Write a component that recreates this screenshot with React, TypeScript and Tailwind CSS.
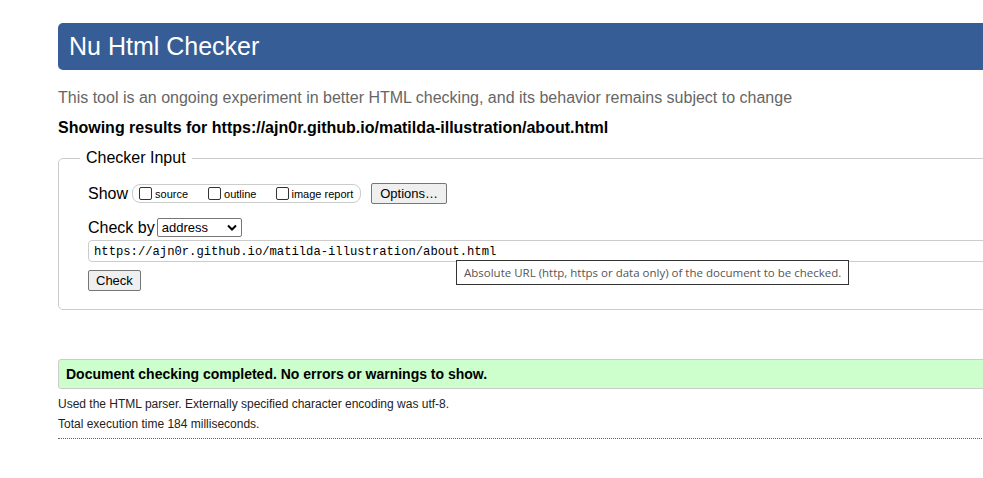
export default function App() {
  const url = "https://ajn0r.github.io/matilda-illustration/about.html";
  return (
    <div className="min-h-[478px] bg-white overflow-hidden font-['Liberation_Sans',Arial,sans-serif] text-black">
      <div className="ml-[58px] w-[1100px] pt-[23px]">
        <h1 className="h-[47px] rounded-l-[5px] bg-[#365d95] pl-[11px] text-[25px] leading-[47px] text-white">
          Nu Html Checker
        </h1>
        <p className="mt-[18px] text-[16px] leading-[20px] text-[#666]">
          This tool is an ongoing experiment in better HTML checking, and its behavior remains subject to change
        </p>
        <p className="mt-[10px] text-[16px] font-bold leading-[20px]">
          Showing results for {url}
        </p>

        <fieldset className="mt-[11px] rounded-[5px] border border-[#ccc] pb-[18px] pl-[29px] pt-[16px]">
          <legend className="ml-[-8px] px-[6px] text-[16px] leading-[18px]">Checker Input</legend>
          <div className="flex h-[21px] items-center text-[16px] leading-[19px]">
            <span className="mr-[4px]">Show</span>
            <div className="flex h-[19px] items-center rounded-[8px] border border-[#ccc] pl-[6px] pr-[7px] text-[11px]">
              <span className="inline-block h-[13px] w-[13px] rounded-[2px] border border-[#333]"></span>
              <span className="ml-[3px] mt-[2px]">source</span>
              <span className="ml-[20px] inline-block h-[13px] w-[13px] rounded-[2px] border border-[#333]"></span>
              <span className="ml-[3px] mt-[2px]">outline</span>
              <span className="ml-[20px] inline-block h-[13px] w-[13px] rounded-[2px] border border-[#333]"></span>
              <span className="ml-[2px] mt-[2px]">image report</span>
            </div>
            <button className="ml-[10px] h-[21px] rounded-[2px] border border-[#767676] bg-[#efefef] px-[8px] text-[13px] leading-[19px]">
              Options…
            </button>
          </div>
          <div className="mt-[14px] flex h-[19px] items-center text-[16px] leading-[19px]">
            <span className="mr-[2px]">Check by</span>
            <div className="flex h-[19px] w-[85px] items-center justify-between rounded-[2px] border border-[#767676] pl-[4px] pr-[4px] text-[13px]">
              <span>address</span>
              <svg width="10" height="7" viewBox="0 0 10 7">
                <path d="M1 1.5 L5 5.5 L9 1.5" fill="none" stroke="#000" strokeWidth="2" />
              </svg>
            </div>
          </div>
          <div className="relative mt-[3px] flex h-[22px] items-center rounded-[4px] border border-[#ccc] pl-[5px] pt-[2px] font-['Liberation_Mono',monospace] text-[12.2px]">
            {url}
            <div className="absolute left-[367px] top-[19px] z-10 h-[25px] whitespace-nowrap border border-[#333] bg-white px-[7px] font-['Open_Sans',sans-serif] text-[11.5px] leading-[23px] text-[#555]">
              Absolute URL (http, https or data only) of the document to be checked.
            </div>
          </div>
          <button className="mt-[8px] block h-[21px] rounded-[2px] border border-[#767676] bg-[#efefef] px-[7px] text-[13px] leading-[19px]">
            Check
          </button>
        </fieldset>

        <div className="mt-[49px] h-[30px] rounded-l-[3px] border border-[#ccc] bg-[#ccffcc] pl-[7px] text-[14px] font-bold leading-[28px]">
          Document checking completed. No errors or warnings to show.
        </div>
        <p className="mt-[7px] text-[12px] leading-[16px] text-[#222]">
          Used the HTML parser. Externally specified character encoding was utf-8.
        </p>
        <p className="mt-[4px] text-[12px] leading-[16px] text-[#222]">
          Total execution time 184 milliseconds.
        </p>
        <div className="mt-[6px] border-t border-dotted border-[#666]"></div>
      </div>
    </div>
  );
}
